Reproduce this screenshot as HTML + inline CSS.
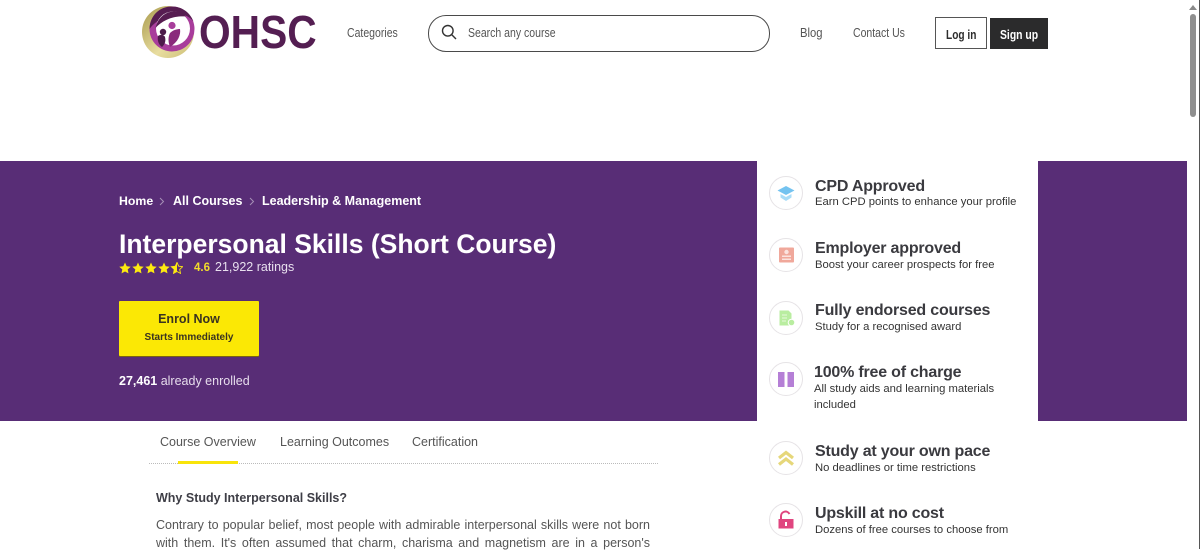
<!DOCTYPE html>
<html lang="en">
<head>
<meta charset="utf-8">
<title>Interpersonal Skills (Short Course)</title>
<style>
html,body{margin:0;padding:0;background:#fff}
body{position:relative;width:1200px;height:549px;overflow:hidden;font-family:"Liberation Sans",sans-serif;color:#333}
.a{position:absolute;white-space:nowrap;line-height:1}
.band{position:absolute;top:161px;height:260px;background:#582d76}
.t{position:absolute;white-space:nowrap;line-height:1;font-weight:700;font-size:16px;color:#3a3a3f;letter-spacing:-.2px}
.s{position:absolute;white-space:nowrap;line-height:1;font-size:11.25px;color:#333}
.c{position:absolute;left:769px;width:32px;height:32px;border:1.5px solid #e6e3e6;border-radius:50%;background:#fff;box-sizing:content-box}
.c svg{position:absolute;left:0;top:0;width:32px;height:32px}
.nav{font-size:12.5px;color:#555;transform:scaleX(.84);transform-origin:left top}
.w{color:#fff}
</style>
</head>
<body>
<!-- logo -->
<svg class="a" style="left:138px;top:4px" width="62" height="58" viewBox="0 0 62 58">
<defs><linearGradient id="g" x1="0" y1="0" x2="1" y2="1"><stop offset="0" stop-color="#a99a4c"/><stop offset=".6" stop-color="#e8dda0"/><stop offset="1" stop-color="#cbbd74"/></linearGradient></defs>
<circle cx="30" cy="28" r="26" fill="url(#g)"/>
<circle cx="34" cy="25" r="22.500" fill="#a83d9b"/>
<path d="M11.500 25C12 11 22 2.500 34 2.500c10 0 18 6 21.500 15-4-5-9-7-14-7-12 0-23 5-30 14.500z" fill="#571d51"/>
<circle cx="35" cy="24.500" r="17" fill="#fff"/>
<path d="M17.500 24C20 13 28 7.500 36 7.500c5 0 9 2 12 5-10-1-22 2-30.500 11.500z" fill="#571d51"/>
<path d="M42 25c1 6-2 13-10 18-2-5-2-10 0-14 3-3 7-4 10-4z" fill="#8a2a7c"/>
<circle cx="34" cy="21.500" r="3.600" fill="#a83d9b"/>
<path d="M20 32c3-2 6-1 7 1 1 4 0 7-3 10-3-2-5-6-4-11z" fill="#4d1a4a"/>
<circle cx="25" cy="28" r="3.200" fill="#4d1a4a"/>
</svg>
<div class="a" style="left:199px;top:9px;font-size:46px;font-weight:700;color:#541e52;transform:scaleX(.885);transform-origin:left top">OHSC</div>

<div class="a nav" style="left:347px;top:27px">Categories</div>
<div class="a" style="left:428px;top:15px;width:340px;height:35px;border:1px solid #4a4a4a;border-radius:18px"></div>
<svg class="a" style="left:441px;top:24px" width="16" height="16" viewBox="0 0 16 16" fill="none" stroke="#333" stroke-width="1.400"><circle cx="6.800" cy="6.800" r="5.300"/><path d="M10.800 10.800L15 15"/></svg>
<div class="a nav" style="left:468px;top:27px">Search any course</div>
<div class="a nav" style="left:800px;top:27px;transform:scaleX(.9)">Blog</div>
<div class="a nav" style="left:853px;top:27px">Contact Us</div>
<div class="a" style="left:935px;top:17px;width:50px;height:30px;border:1px solid #555"></div>
<div class="a" style="left:946px;top:28px;font-size:13px;font-weight:700;color:#2d2d2d;transform:scaleX(.78);transform-origin:left top">Log in</div>
<div class="a" style="left:990px;top:18px;width:58px;height:31px;background:#2b2b2c"></div>
<div class="a" style="left:1000px;top:28px;font-size:13px;font-weight:700;color:#fff;transform:scaleX(.8);transform-origin:left top">Sign up</div>

<!-- scrollbar -->
<svg class="a" style="left:1188px;top:4px" width="10" height="8"><path d="M1 6L5 1l4 5z" fill="#8a8a8a"/></svg>
<div class="a" style="left:1190px;top:14px;width:6px;height:103px;background:#8f8f8f;border-radius:3px"></div>
<div class="a" style="left:1199px;top:0;width:1px;height:549px;background:#555"></div>

<!-- hero -->
<div class="band" style="left:0;width:757px"></div>
<div class="band" style="left:1038px;width:149px"></div>

<div class="a w" style="left:119px;top:195px;font-size:12.300px;font-weight:700">Home</div>
<svg class="a" style="left:159px;top:197px" width="6" height="9" fill="none" stroke="#a58fb6"><path d="M1 1l3.500 3.500L1 8"/></svg>
<div class="a w" style="left:173px;top:195px;font-size:12.500px;font-weight:700">All Courses</div>
<svg class="a" style="left:249px;top:197px" width="6" height="9" fill="none" stroke="#a58fb6"><path d="M1 1l3.500 3.500L1 8"/></svg>
<div class="a w" style="left:262px;top:195px;font-size:12.500px;font-weight:700">Leadership &amp; Management</div>

<div class="a w" style="left:119px;top:231px;font-size:26.500px;font-weight:700">Interpersonal Skills (Short Course)</div>

<svg class="a" style="left:119px;top:262px" width="64" height="12" viewBox="0 0 64 12">
<defs><path id="st" d="M6 .5l1.700 3.700 4 .5-3 2.700.8 4L6 9.500l-3.500 1.900.8-4-3-2.700 4-.5z"/></defs>
<use href="#st" fill="#fde910"/><use href="#st" x="13" fill="#fde910"/><use href="#st" x="26" fill="#fde910"/><use href="#st" x="39" fill="#fde910"/>
<use href="#st" x="52" fill="none" stroke="#fde910" stroke-width=".9"/>
<path d="M58 .5V9.500l-3.500 1.900.8-4-3-2.700 4-.5z" fill="#fde910"/>
</svg>
<div class="a" style="left:194px;top:263px;font-size:11.500px;font-weight:700;color:#f2dd2a">4.6</div>
<div class="a" style="left:215px;top:261px;font-size:12.500px;color:#e8e0ee">21,922 ratings</div>

<div class="a" style="left:119px;top:301px;width:140px;height:55px;background:#fbe805;border-radius:1px;box-shadow:0 1px 0 #7a6410"></div>
<div class="a" style="left:119px;top:313px;width:140px;text-align:center;font-size:12.500px;font-weight:700;color:#3a3320">Enrol Now</div>
<div class="a" style="left:119px;top:333px;width:140px;text-align:center;font-size:10px;font-weight:700;color:#3a3320">Starts Immediately</div>
<div class="a" style="left:119px;top:375px;font-size:12.500px;color:#e6dcec"><b style="color:#fff">27,461</b> already enrolled</div>

<!-- tabs -->
<div class="a" style="left:160px;top:436px;font-size:12.500px;color:#555">Course Overview</div>
<div class="a" style="left:280px;top:436px;font-size:12.500px;color:#555">Learning Outcomes</div>
<div class="a" style="left:412px;top:436px;font-size:12.500px;color:#555">Certification</div>
<div class="a" style="left:149px;top:463px;width:509px;border-top:1px dotted #bbb"></div>
<div class="a" style="left:178px;top:461px;width:60px;height:3px;background:#f8e40a"></div>

<div class="a" style="left:156px;top:492px;font-size:12.500px;font-weight:700;color:#3e3e46">Why Study Interpersonal Skills?</div>
<div class="a" style="left:156px;top:519px;width:494px;font-size:12.500px;color:#555;text-align:justify;text-align-last:justify">Contrary to popular belief, most people with admirable interpersonal skills were not born</div>
<div class="a" style="left:156px;top:537px;width:494px;font-size:12.500px;color:#555;text-align:justify;text-align-last:justify">with them. It's often assumed that charm, charisma and magnetism are in a person's</div>

<!-- side list -->
<div class="c" style="top:176px"><svg viewBox="0 0 32 32"><path d="M16 9l8.500 4.500L16 18l-8.500-4.500z" fill="#74c3f0"/><path d="M10.500 17v3.500L16 24l5.500-3.500V17L16 20z" fill="#a9dcf7"/></svg></div>
<div class="t" style="left:815px;top:179px">CPD Approved</div>
<div class="s" style="left:815px;top:197px">Earn CPD points to enhance your profile</div>

<div class="c" style="top:238px"><svg viewBox="0 0 32 32"><rect x="9" y="8.500" width="15" height="15" rx="1" fill="#f0a89b"/><circle cx="16.500" cy="13" r="2.200" fill="#fbe3df"/><rect x="12" y="16.500" width="9" height="1.500" fill="#fbe3df"/><rect x="12" y="19.500" width="9" height="1.500" fill="#fbe3df"/></svg></div>
<div class="t" style="left:815px;top:241px">Employer approved</div>
<div class="s" style="left:815px;top:260px">Boost your career prospects for free</div>

<div class="c" style="top:301px"><svg viewBox="0 0 32 32"><path d="M9.500 8.500h9l3 3v12h-12z" fill="#b9eda0"/><circle cx="21.500" cy="20.500" r="3.300" fill="#b9eda0" stroke="#fff"/><path d="M12 13h5M12 16h5M12 19h4" stroke="#e6f9dc" stroke-width="1"/></svg></div>
<div class="t" style="left:815px;top:303px">Fully endorsed courses</div>
<div class="s" style="left:815px;top:322px">Study for a recognised award</div>

<div class="c" style="top:362px"><svg viewBox="0 0 32 32"><rect x="8" y="9" width="6.500" height="15" fill="#b57fd6"/><rect x="17.500" y="9" width="6.500" height="15" fill="#b57fd6"/></svg></div>
<div class="t" style="left:814px;top:365px">100% free of charge</div>
<div class="s" style="left:814px;top:384px">All study aids and learning materials</div>
<div class="s" style="left:814px;top:400px">included</div>

<div class="c" style="top:441px"><svg viewBox="0 0 32 32" fill="none" stroke="#e6d77a" stroke-width="3.200"><path d="M9 16l7-5.500 7 5.500"/><path d="M9 22.500l7-5.500 7 5.500"/></svg></div>
<div class="t" style="left:815px;top:444px">Study at your own pace</div>
<div class="s" style="left:815px;top:463px">No deadlines or time restrictions</div>

<div class="c" style="top:503px"><svg viewBox="0 0 32 32"><path d="M11 15v-3a4.500 4.500 0 0 1 8.500-2" fill="none" stroke="#e0457f" stroke-width="2"/><rect x="8.500" y="15" width="15" height="9.500" fill="#e0457f"/><rect x="15" y="18" width="2" height="4" fill="#fff"/></svg></div>
<div class="t" style="left:815px;top:506px">Upskill at no cost</div>
<div class="s" style="left:815px;top:525px">Dozens of free courses to choose from</div>
</body>
</html>
